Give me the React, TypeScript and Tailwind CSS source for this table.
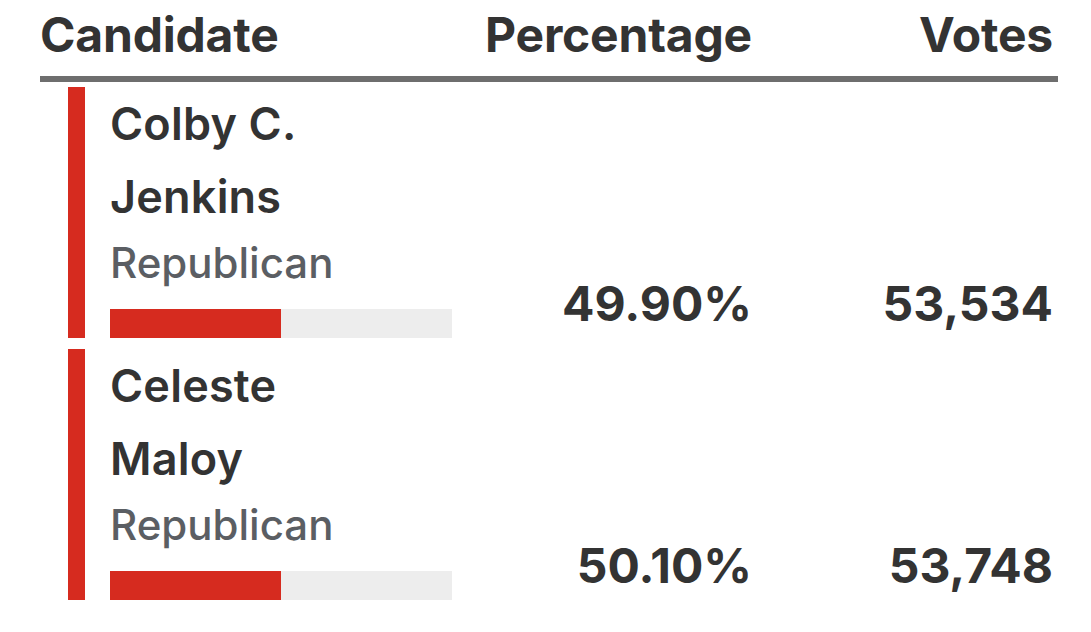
import React from 'react';

const rows = [
    { name: ['Colby C.', 'Jenkins'], party: 'Republican', pct: 49.9, votes: '53,534' },
    { name: ['Celeste', 'Maloy'], party: 'Republican', pct: 50.1, votes: '53,748' },
];

export default function App() {
    return (
        <div className="min-h-screen bg-white text-[#333333]" style={{ fontFamily: 'Inter, "Noto Sans", sans-serif' }}>
            <div className="ml-[40px] w-[1018px]">
                <div className="flex border-b-[6px] border-[#6e6e6e] pt-[7px] pb-[13px] text-[48px] font-bold leading-[56px] tracking-[-0.2px]">
                    <div className="w-[420px]">Candidate</div>
                    <div className="w-[292px] text-right">Percentage</div>
                    <div className="flex-1 pr-[5px] text-right">Votes</div>
                </div>
                <div className="mt-[5px] flex flex-col gap-[11px]">
                    {rows.map((r) => (
                        <div key={r.votes} className="flex h-[251px]">
                            <div className="flex w-[420px] pl-[28px]">
                                <div className="w-[17px] bg-[#d62b1f]" />
                                <div className="ml-[25px] flex flex-col">
                                    {r.name.map((line) => (
                                        <div key={line} className="text-[45px] font-semibold leading-[73px] tracking-[0.2px]">{line}</div>
                                    ))}
                                    <div className="text-[42px] font-medium leading-[59px] text-[#5b5e63]">{r.party}</div>
                                    <div className="mt-[17px] h-[29px] w-[342px] bg-[#ededed]">
                                        <div className="h-full bg-[#d62b1f]" style={{ width: `${r.pct}%` }} />
                                    </div>
                                </div>
                            </div>
                            <div className="flex w-[292px] items-end justify-end pb-[10px] text-[48px] font-bold leading-[48px]">
                                {r.pct.toFixed(2)}%
                            </div>
                            <div className="flex flex-1 items-end justify-end pb-[10px] pr-[5px] text-[48px] font-bold leading-[48px]">
                                {r.votes}
                            </div>
                        </div>
                    ))}
                </div>
            </div>
        </div>
    );
}
